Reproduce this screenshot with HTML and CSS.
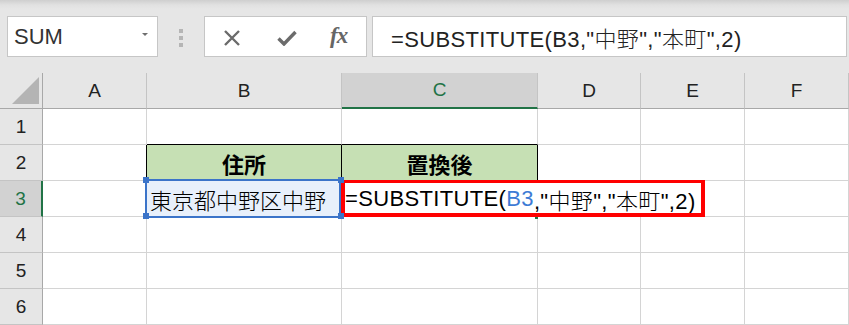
FILE: index.html
```html
<!DOCTYPE html>
<html lang="ja">
<head>
<meta charset="utf-8">
<title>SUBSTITUTE</title>
<link rel="stylesheet" href="styles.css">
</head>
<body>
<div class="toolbar">
  <div class="namebox"><span class="name">SUM</span><span class="caret"></span></div>
  <div class="grip"><i></i><i></i><i></i></div>
  <div class="fxbox">
    <svg class="ico-x" width="18" height="16" viewBox="0 0 18 16"><path d="M2 1 L16 15 M16 1 L2 15" stroke="#6b6b6b" stroke-width="2.4" fill="none"/></svg>
    <svg class="ico-ok" width="20" height="16" viewBox="0 0 20 16"><path d="M1.5 8.5 L7 14 L18.5 2" stroke="#6b6b6b" stroke-width="3.4" fill="none" stroke-linejoin="miter"/></svg>
    <span class="fx">fx</span>
  </div>
  <div class="formula">=SUBSTITUTE(B3,"中野","本町",2)</div>
</div>
<div class="sheet">
  <div class="hd corner"><span class="tri"></span></div>
  <div class="hd col">A</div>
  <div class="hd col">B</div>
  <div class="hd col sel">C</div>
  <div class="hd col">D</div>
  <div class="hd col">E</div>
  <div class="hd col">F</div>

  <div class="hd row">1</div>
  <div class="c"></div>
  <div class="c bb"></div>
  <div class="c bb"></div>
  <div class="c"></div>
  <div class="c"></div>
  <div class="c"></div>

  <div class="hd row">2</div>
  <div class="c br"></div>
  <div class="c th">住所</div>
  <div class="c th">置換後</div>
  <div class="c"></div>
  <div class="c"></div>
  <div class="c"></div>

  <div class="hd row rsel">3</div>
  <div class="c"></div>
  <div class="c b3">東京都中野区中野</div>
  <div class="c c3">=SUBSTITUTE(<span class="ref">B3</span>,"中野","本町",2)</div>
  <div class="c d3"></div>
  <div class="c"></div>
  <div class="c"></div>

  <div class="hd row">4</div>
  <div class="c"></div><div class="c"></div><div class="c"></div><div class="c"></div><div class="c"></div><div class="c"></div>

  <div class="hd row">5</div>
  <div class="c"></div><div class="c"></div><div class="c"></div><div class="c"></div><div class="c"></div><div class="c"></div>

  <div class="hd row">6</div>
  <div class="c"></div><div class="c"></div><div class="c"></div><div class="c"></div><div class="c"></div><div class="c"></div>

  <div class="range"></div>
  <div class="hdl tl"></div>
  <div class="hdl tr"></div>
  <div class="hdl bl"></div>
  <div class="hdl brr"></div>
  <div class="fill"></div>
  <div class="mark"></div>
</div>
</body>
</html>
```
FILE: styles.css
```css
html, body {
  margin: 0;
  padding: 0;
  background: #ffffff;
  overflow: hidden;
}
body {
  font-family: "Liberation Sans", "Noto Sans CJK JP", sans-serif;
  width: 849px;
  height: 325px;
}
.toolbar {
  height: 73px;
  box-sizing: border-box;
  padding: 16px 2px 0 7px;
  display: flex;
  align-items: flex-start;
  background: linear-gradient(#cfcfcf 0px, #e1e1e1 5px, #e6e6e6 9px, #e6e6e6 100%);
}
.namebox {
  width: 151px;
  height: 41px;
  box-sizing: border-box;
  border: 1px solid #c6c6c6;
  background: #fff;
  display: flex;
  align-items: center;
  padding-left: 6px;
}
.name {
  font-size: 22px;
  color: #333;
}
.caret {
  margin-left: auto;
  margin-right: 9px;
  width: 0;
  height: 0;
  border-left: 3px solid transparent;
  border-right: 3px solid transparent;
  border-top: 3px solid #6e6e6e;
  margin-top: -5px;
}
.grip {
  margin: 13px 0 0 21px;
  display: flex;
  flex-direction: column;
  gap: 3px;
}
.grip i {
  display: block;
  width: 4px;
  height: 4px;
  background: #b5b5b5;
}
.fxbox {
  margin-left: 21px;
  width: 163px;
  height: 41px;
  box-sizing: border-box;
  border: 1px solid #c6c6c6;
  background: #fff;
  display: flex;
  align-items: center;
  padding-left: 18px;
}
.ico-x { margin-top: 2px; }
.ico-ok { margin-left: 36px; margin-top: 3px; }
.fx {
  margin-left: 33px;
  font-family: "Liberation Serif", serif;
  font-style: italic;
  font-weight: bold;
  font-size: 23px;
  color: #666;
  letter-spacing: -1px;
  margin-top: -2px;
}
.formula {
  margin-left: 5px;
  flex: 1;
  height: 41px;
  box-sizing: border-box;
  border: 1px solid #c6c6c6;
  background: #fff;
  display: flex;
  align-items: center;
  padding-left: 18px;
  font-size: 22px;
  color: #222;
  white-space: nowrap;
  font-weight: 300;
  letter-spacing: 0.35px;
}
.sheet {
  position: relative;
  display: grid;
  grid-template-columns: 43px 104px 195px 196px 103px 104px 1fr;
  grid-auto-rows: 36px;
}
.sheet > .c, .sheet > .hd {
  box-sizing: border-box;
  border-right: 1px solid #d4d4d4;
  border-bottom: 1px solid #d4d4d4;
  display: flex;
  align-items: center;
  white-space: nowrap;
  font-size: 22px;
  font-weight: 300;
  color: #000;
}
.sheet > .hd {
  background: #e6e6e6;
  justify-content: center;
  font-size: 19px;
  color: #222;
  border-right-color: #c4c4c4;
  border-bottom-color: #c4c4c4;
}
.sheet > .col {
  border-bottom-color: #a8a8a8;
}
.sheet > .row {
  border-right-color: #a8a8a8;
}
.sheet > .corner {
  justify-content: flex-end;
  align-items: flex-end;
  padding: 0 3px 4px 0;
  border-right-color: #a8a8a8;
  border-bottom-color: #a8a8a8;
}
.tri {
  width: 27px;
  height: 27px;
  background: #b4b4b4;
  clip-path: polygon(100% 0, 100% 100%, 0 100%);
}
.sheet > .sel {
  background: #d2d2d2;
  color: #217346;
  border-bottom: 2px solid #217346;
}
.sheet > .rsel {
  background: #d2d2d2;
  color: #217346;
  border-right: 2px solid #217346;
}
.sheet > .bb { border-bottom-color: #000; }
.sheet > .br { border-right-color: #000; }
.sheet > .th {
  background: #c6e0b4;
  border-right-color: #000;
  border-bottom-color: #000;
  justify-content: center;
  font-weight: bold;
}
.sheet > .b3 {
  background: #e8f0fb;
  padding-left: 3px;
}
.sheet > .c3 {
  padding-left: 3px;
  border-right-color: transparent;
  overflow: visible;
  letter-spacing: 0.35px;
  z-index: 1;
}
.sheet > .d3 { border-right-color: transparent; }
.ref { color: #3d7bd5; }
.range {
  position: absolute;
  left: 145px;
  top: 106px;
  width: 196px;
  height: 39px;
  box-sizing: border-box;
  border: 2px solid #3b74c9;
  z-index: 2;
}
.mark {
  position: absolute;
  left: 341px;
  top: 107px;
  width: 364px;
  height: 37px;
  box-sizing: border-box;
  border: 4px solid #ff0000;
  border-top-width: 3px;
  z-index: 3;
}
.hdl {
  position: absolute;
  width: 6px;
  height: 6px;
  background: #3b74c9;
  z-index: 4;
}
.hdl.tl { left: 143px; top: 104px; }
.hdl.tr { left: 338px; top: 104px; }
.hdl.bl { left: 143px; top: 140px; }
.hdl.brr { left: 338px; top: 140px; }
.fill {
  position: absolute;
  left: 535px;
  top: 142px;
  width: 3px;
  height: 4px;
  background: #217346;
  z-index: 2;
}
```
